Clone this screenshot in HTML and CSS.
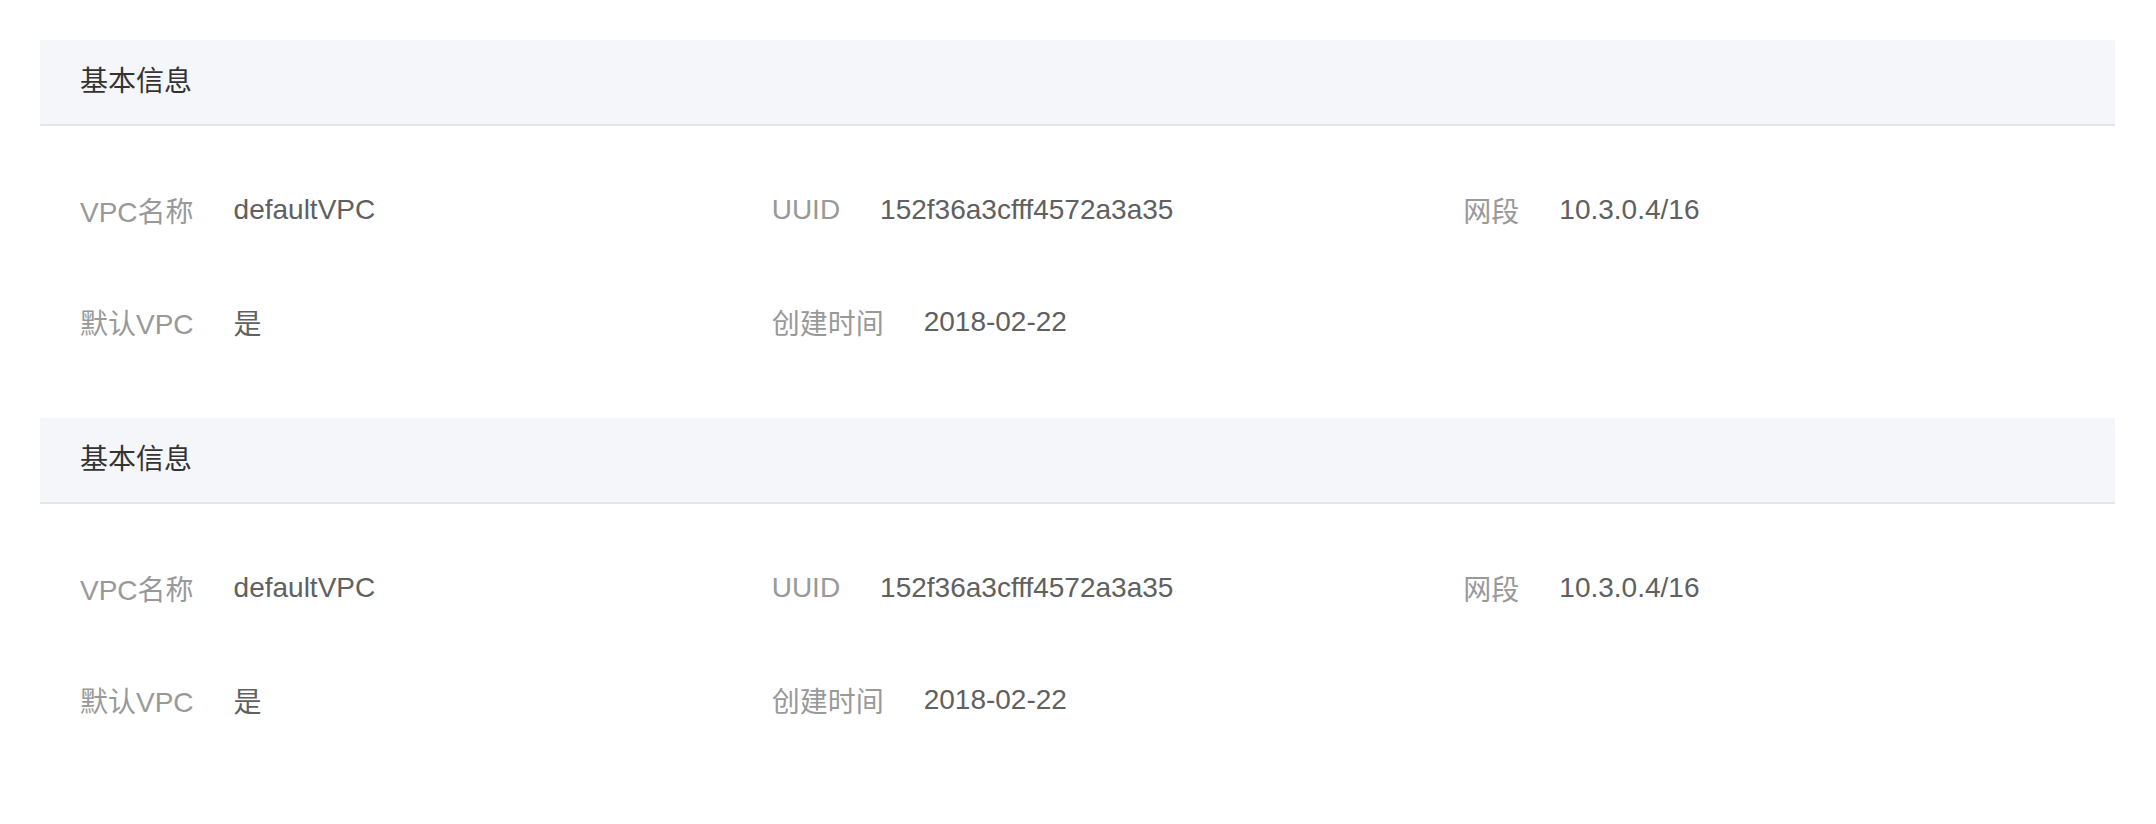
FILE: index.html
```html
<!DOCTYPE html>
<html lang="zh">
<head>
<meta charset="utf-8">
<title>基本信息</title>
<link rel="stylesheet" href="styles.css">
</head>
<body>
<div class="page">
  <section class="panel">
    <div class="panel-head">基本信息</div>
    <div class="panel-body">
      <div class="item"><span class="label">VPC名称</span><span class="value">defaultVPC</span></div>
      <div class="item"><span class="label">UUID</span><span class="value">152f36a3cfff4572a3a35</span></div>
      <div class="item"><span class="label">网段</span><span class="value">10.3.0.4/16</span></div>
      <div class="item"><span class="label">默认VPC</span><span class="value">是</span></div>
      <div class="item"><span class="label">创建时间</span><span class="value">2018-02-22</span></div>
    </div>
  </section>
  <section class="panel">
    <div class="panel-head">基本信息</div>
    <div class="panel-body">
      <div class="item"><span class="label">VPC名称</span><span class="value">defaultVPC</span></div>
      <div class="item"><span class="label">UUID</span><span class="value">152f36a3cfff4572a3a35</span></div>
      <div class="item"><span class="label">网段</span><span class="value">10.3.0.4/16</span></div>
      <div class="item"><span class="label">默认VPC</span><span class="value">是</span></div>
      <div class="item"><span class="label">创建时间</span><span class="value">2018-02-22</span></div>
    </div>
  </section>
</div>
</body>
</html>
```

FILE: styles.css
```css
html, body {
  margin: 0;
  padding: 0;
  background: #ffffff;
}

body {
  font-family: "Liberation Sans", "Noto Sans CJK SC", sans-serif;
  font-size: 28px;
  color: #333333;
}

.page {
  padding: 40px 41px 0 40px;
}

.panel-head {
  height: 84px;
  line-height: 84px;
  padding: 0 40px;
  background: #f5f6fa;
  border-bottom: 2px solid #e1e6ee;
  color: #333333;
}

.panel-body {
  display: grid;
  grid-template-columns: repeat(3, 1fr);
  padding: 28px 0 40px;
}

.item {
  display: flex;
  align-items: center;
  height: 112px;
  padding: 0 40px;
}

.label {
  color: #999999;
  margin-right: 40px;
}

.value {
  color: #606060;
}
```
